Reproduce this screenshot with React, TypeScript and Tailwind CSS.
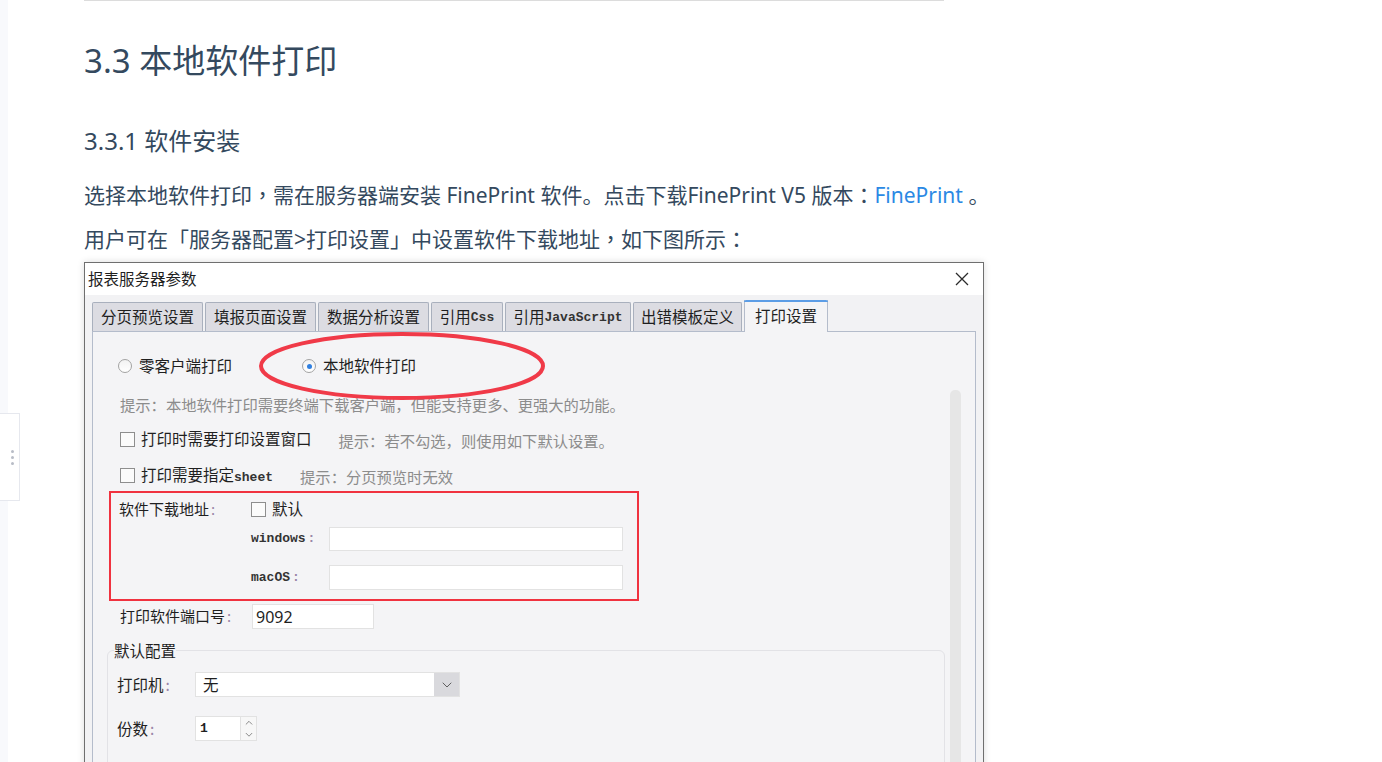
import { ChevronDown, ChevronUp } from "lucide-react";

const mono = "font-['Liberation_Mono',monospace] font-bold text-[13px] text-[#333]";
const tc = "font-['Noto_Sans_CJK_TC',sans-serif] leading-none";

type TabProps = { w: string; children: React.ReactNode };
const Tab = (props: TabProps) => (
  <div
    className={`flex h-[29px] items-center justify-center rounded-t-[2px] border border-b-0 border-[#a9b0bd] bg-[#dcdce2] text-[15.5px] leading-none text-[#1f1f1f] ${props.w}`}
  >
    {props.children}
  </div>
);

const Radio = (props: { checked?: boolean }) => (
  <span className="flex h-[14px] w-[14px] items-center justify-center rounded-full border border-[#a3a3a3] bg-gradient-to-b from-[#f2f2f2] to-white">
    {props.checked && <span className="h-[5px] w-[5px] rounded-full bg-[#2f7fe0]" />}
  </span>
);

const Checkbox = () => <span className="h-[15px] w-[15px] shrink-0 border border-[#8e8e8e] bg-[#fbfbfb]" />;

const Colon = () => <span className="ml-[2px] text-[#9a86a8]">:</span>;

const ServerDialog = () => {
  return (
    <div className="relative mt-px w-[900px] shrink-0 border border-[#6f6f6f] bg-[#f2f2f4] shadow-[0_0_7px_rgba(0,0,0,0.14)] font-['Noto_Sans_CJK_SC',sans-serif] text-[#1f1f1f]">
      {/* タイトルバー */}
      <div className="flex h-[32px] items-center justify-between bg-white pl-[3px] pr-[14px]">
        <span className="text-[15.5px]">报表服务器参数</span>
        <svg width="14" height="14" viewBox="0 0 14 14" stroke="#2b2b2b" strokeWidth="1.3">
          <path d="M1 1l12 12M13 1L1 13" />
        </svg>
      </div>

      <div className="px-[7px] pt-[7px]">
        {/* タブ */}
        <div className="flex h-[29px] items-end gap-[2px]">
          <Tab w="w-[111px]">分页预览设置</Tab>
          <Tab w="w-[111px]">填报页面设置</Tab>
          <Tab w="w-[111px]">数据分析设置</Tab>
          <Tab w="w-[72px]">
            引用<span className={mono}>Css</span>
          </Tab>
          <Tab w="w-[126px]">
            引用<span className={mono}>JavaScript</span>
          </Tab>
          <Tab w="w-[109px]">出错模板定义</Tab>
          <div className="relative z-10 -mb-px flex h-[32px] w-[84px] items-center justify-center border border-t-0 border-b-0 border-[#b4bccb] bg-[#f4f4f6] text-[15.5px] leading-none">
            <span className="absolute inset-x-[-1px] top-0 h-[2px] rounded-t-[2px] bg-[#5c9de6]" />
            打印设置
          </div>
        </div>

        {/* 内容 */}
        <div className="flex border border-[#b4bccb] bg-[#f4f4f6]">
          <div className="flex flex-1 flex-col pt-[16px]">
            <div className="flex h-[36px] shrink-0 items-center pl-[25px] text-[15.5px]">
              <Radio />
              <span className="ml-[7px]">零客户端打印</span>
              <span className="ml-[70px]">
                <Radio checked />
              </span>
              <span className="ml-[7px]">本地软件打印</span>
            </div>
            <div className="flex h-[40px] shrink-0 items-center pl-[27px] text-[15.3px] text-[#8c8c8c]">
              提示：本地软件打印需要终端下载客户端，但能支持更多、更强大的功能。
            </div>
            <div className="flex h-[30px] shrink-0 items-center pl-[27px] text-[15.5px]">
              <Checkbox />
              <span className="ml-[6px]">打印时需要打印设置窗口</span>
              <span className="ml-[27px] mt-[3px] text-[15.3px] text-[#8c8c8c]">提示：若不勾选，则使用如下默认设置。</span>
            </div>
            <div className="mt-[6px] flex h-[30px] shrink-0 items-center pl-[27px] text-[15.5px]">
              <Checkbox />
              <span className="ml-[6px]">
                打印需要指定<span className={mono}>sheet</span>
              </span>
              <span className="ml-[27px] mt-[3px] text-[15.3px] text-[#8c8c8c]">提示：分页预览时无效</span>
            </div>

            {/* 软件下载地址 */}
            <div className="ml-[16px] mt-px flex h-[110px] w-[530px] shrink-0 border-2 border-[#f0323f] pl-[8px] text-[15px]">
              <div className="flex h-[32px] w-[132px] items-center">
                软件下载地址<Colon />
              </div>
              <div className="flex flex-col">
                <div className="flex h-[32px] items-center">
                  <Checkbox />
                  <span className="ml-[6px] text-[15.5px]">默认</span>
                </div>
                <div className="mt-[2px] flex h-[24px] items-center">
                  <span className={`w-[78px] ${mono} text-[12px]`}>
                    windows<Colon />
                  </span>
                  <span className="h-[24px] w-[294px] border border-[#e2e2e2] bg-white" />
                </div>
                <div className="mt-[14px] flex h-[25px] items-center">
                  <span className={`w-[78px] ${mono} text-[12px]`}>
                    macOS<Colon />
                  </span>
                  <span className="h-[25px] w-[294px] border border-[#e2e2e2] bg-white" />
                </div>
              </div>
            </div>

            <div className="mt-[3px] flex h-[25px] shrink-0 items-center pl-[27px] text-[15px]">
              <span className="w-[132px]">
                打印软件端口号<Colon />
              </span>
              <span className="flex h-[25px] w-[122px] items-center border border-[#e2e2e2] bg-white pl-[3px] font-['Noto_Sans',sans-serif] text-[16px]">
                9092
              </span>
            </div>

            {/* 默认配置 */}
            <fieldset className="ml-[14px] mt-[11px] h-[200px] w-[838px] shrink-0 rounded-[6px] border border-[#e2e2e6]">
              <legend className="ml-[6px] text-[15.5px] leading-[20px]">默认配置</legend>
              <div className="mt-[12px] flex h-[25px] items-center pl-[9px] text-[15.5px]">
                <span className="w-[78px]">
                  打印机<Colon />
                </span>
                <div className="flex h-[25px] w-[265px] border border-[#e2e2e2] bg-white">
                  <span className="flex flex-1 items-center pl-[7px]">无</span>
                  <span className="flex w-[25px] items-center justify-center bg-[#d9d9dd]">
                    <ChevronDown size={16} strokeWidth={1.4} color="#555" />
                  </span>
                </div>
              </div>
              <div className="mt-[19px] flex h-[25px] items-center pl-[9px] text-[15.5px]">
                <span className="w-[78px]">
                  份数<Colon />
                </span>
                <div className="flex h-[25px] w-[62px] border border-[#e2e2e2] bg-white">
                  <span className="flex flex-1 items-center pl-[4px] font-['Liberation_Mono',monospace] text-[13px] font-bold">1</span>
                  <span className="flex w-[16px] flex-col items-center justify-center border-l border-[#e2e2e2] bg-[#f7f7f7]">
                    <ChevronUp size={12} strokeWidth={1.4} color="#555" />
                    <ChevronDown size={12} strokeWidth={1.4} color="#555" />
                  </span>
                </div>
              </div>
            </fieldset>
          </div>
          {/* スクロールバー */}
          <div className="mr-[14px] mt-[58px] w-[11px] rounded-t-[5px] bg-[#e6e6e6]" />
        </div>
      </div>

      {/* 赤い丸 */}
      <svg className="pointer-events-none absolute left-0 top-0" width="898" height="500">
        <ellipse cx="317" cy="103" rx="141" ry="32" fill="none" stroke="#f03a48" strokeWidth="4" />
      </svg>
    </div>
  );
};

export default function App() {
  return (
    <div className="flex h-[762px] w-[1382px] overflow-hidden bg-white font-['Noto_Sans','Noto_Sans_CJK_SC',sans-serif] text-[#34495e]">
      {/* サイドバー */}
      <div className="relative h-full w-[8px] shrink-0 bg-[#f8f9fc]">
        <div className="absolute left-0 top-[413px] flex h-[88px] w-[20px] items-center justify-end border-y border-r border-[#e6e8ee] bg-white pr-[5px]">
          <span className="flex flex-col gap-[3px]">
            <span className="h-[3px] w-[3px] rounded-full bg-[#b8bcc6]" />
            <span className="h-[3px] w-[3px] rounded-full bg-[#b8bcc6]" />
            <span className="h-[3px] w-[3px] rounded-full bg-[#b8bcc6]" />
          </span>
        </div>
      </div>

      <main className="flex flex-col pl-[76px]">
        <div className="h-px w-[860px] shrink-0 bg-[#dcdcdc]" />
        <h2 className="mt-[39px] h-[42px] text-[33px] leading-[42px] font-normal">3.3 本地软件打印</h2>
        <h3 className="mt-[43px] h-[32px] text-[24px] leading-[32px] font-normal">3.3.1 软件安装</h3>
        <p className="mt-[16px] h-[44px] whitespace-nowrap text-[21px] leading-[44px]">
          选择本地软件打印<span className={tc}>，</span>需在服务器端安装 FinePrint 软件。点击下载FinePrint V5 版本<span className={tc}>：</span>
          <a className="text-[#2b89e4]">FinePrint</a> 。
        </p>
        <p className="h-[44px] whitespace-nowrap text-[21px] leading-[44px]">
          用户可在「服务器配置&gt;打印设置」中设置软件下载地址<span className={tc}>，</span>如下图所示<span className={tc}>：</span>
        </p>
        <ServerDialog />
      </main>
    </div>
  );
}
